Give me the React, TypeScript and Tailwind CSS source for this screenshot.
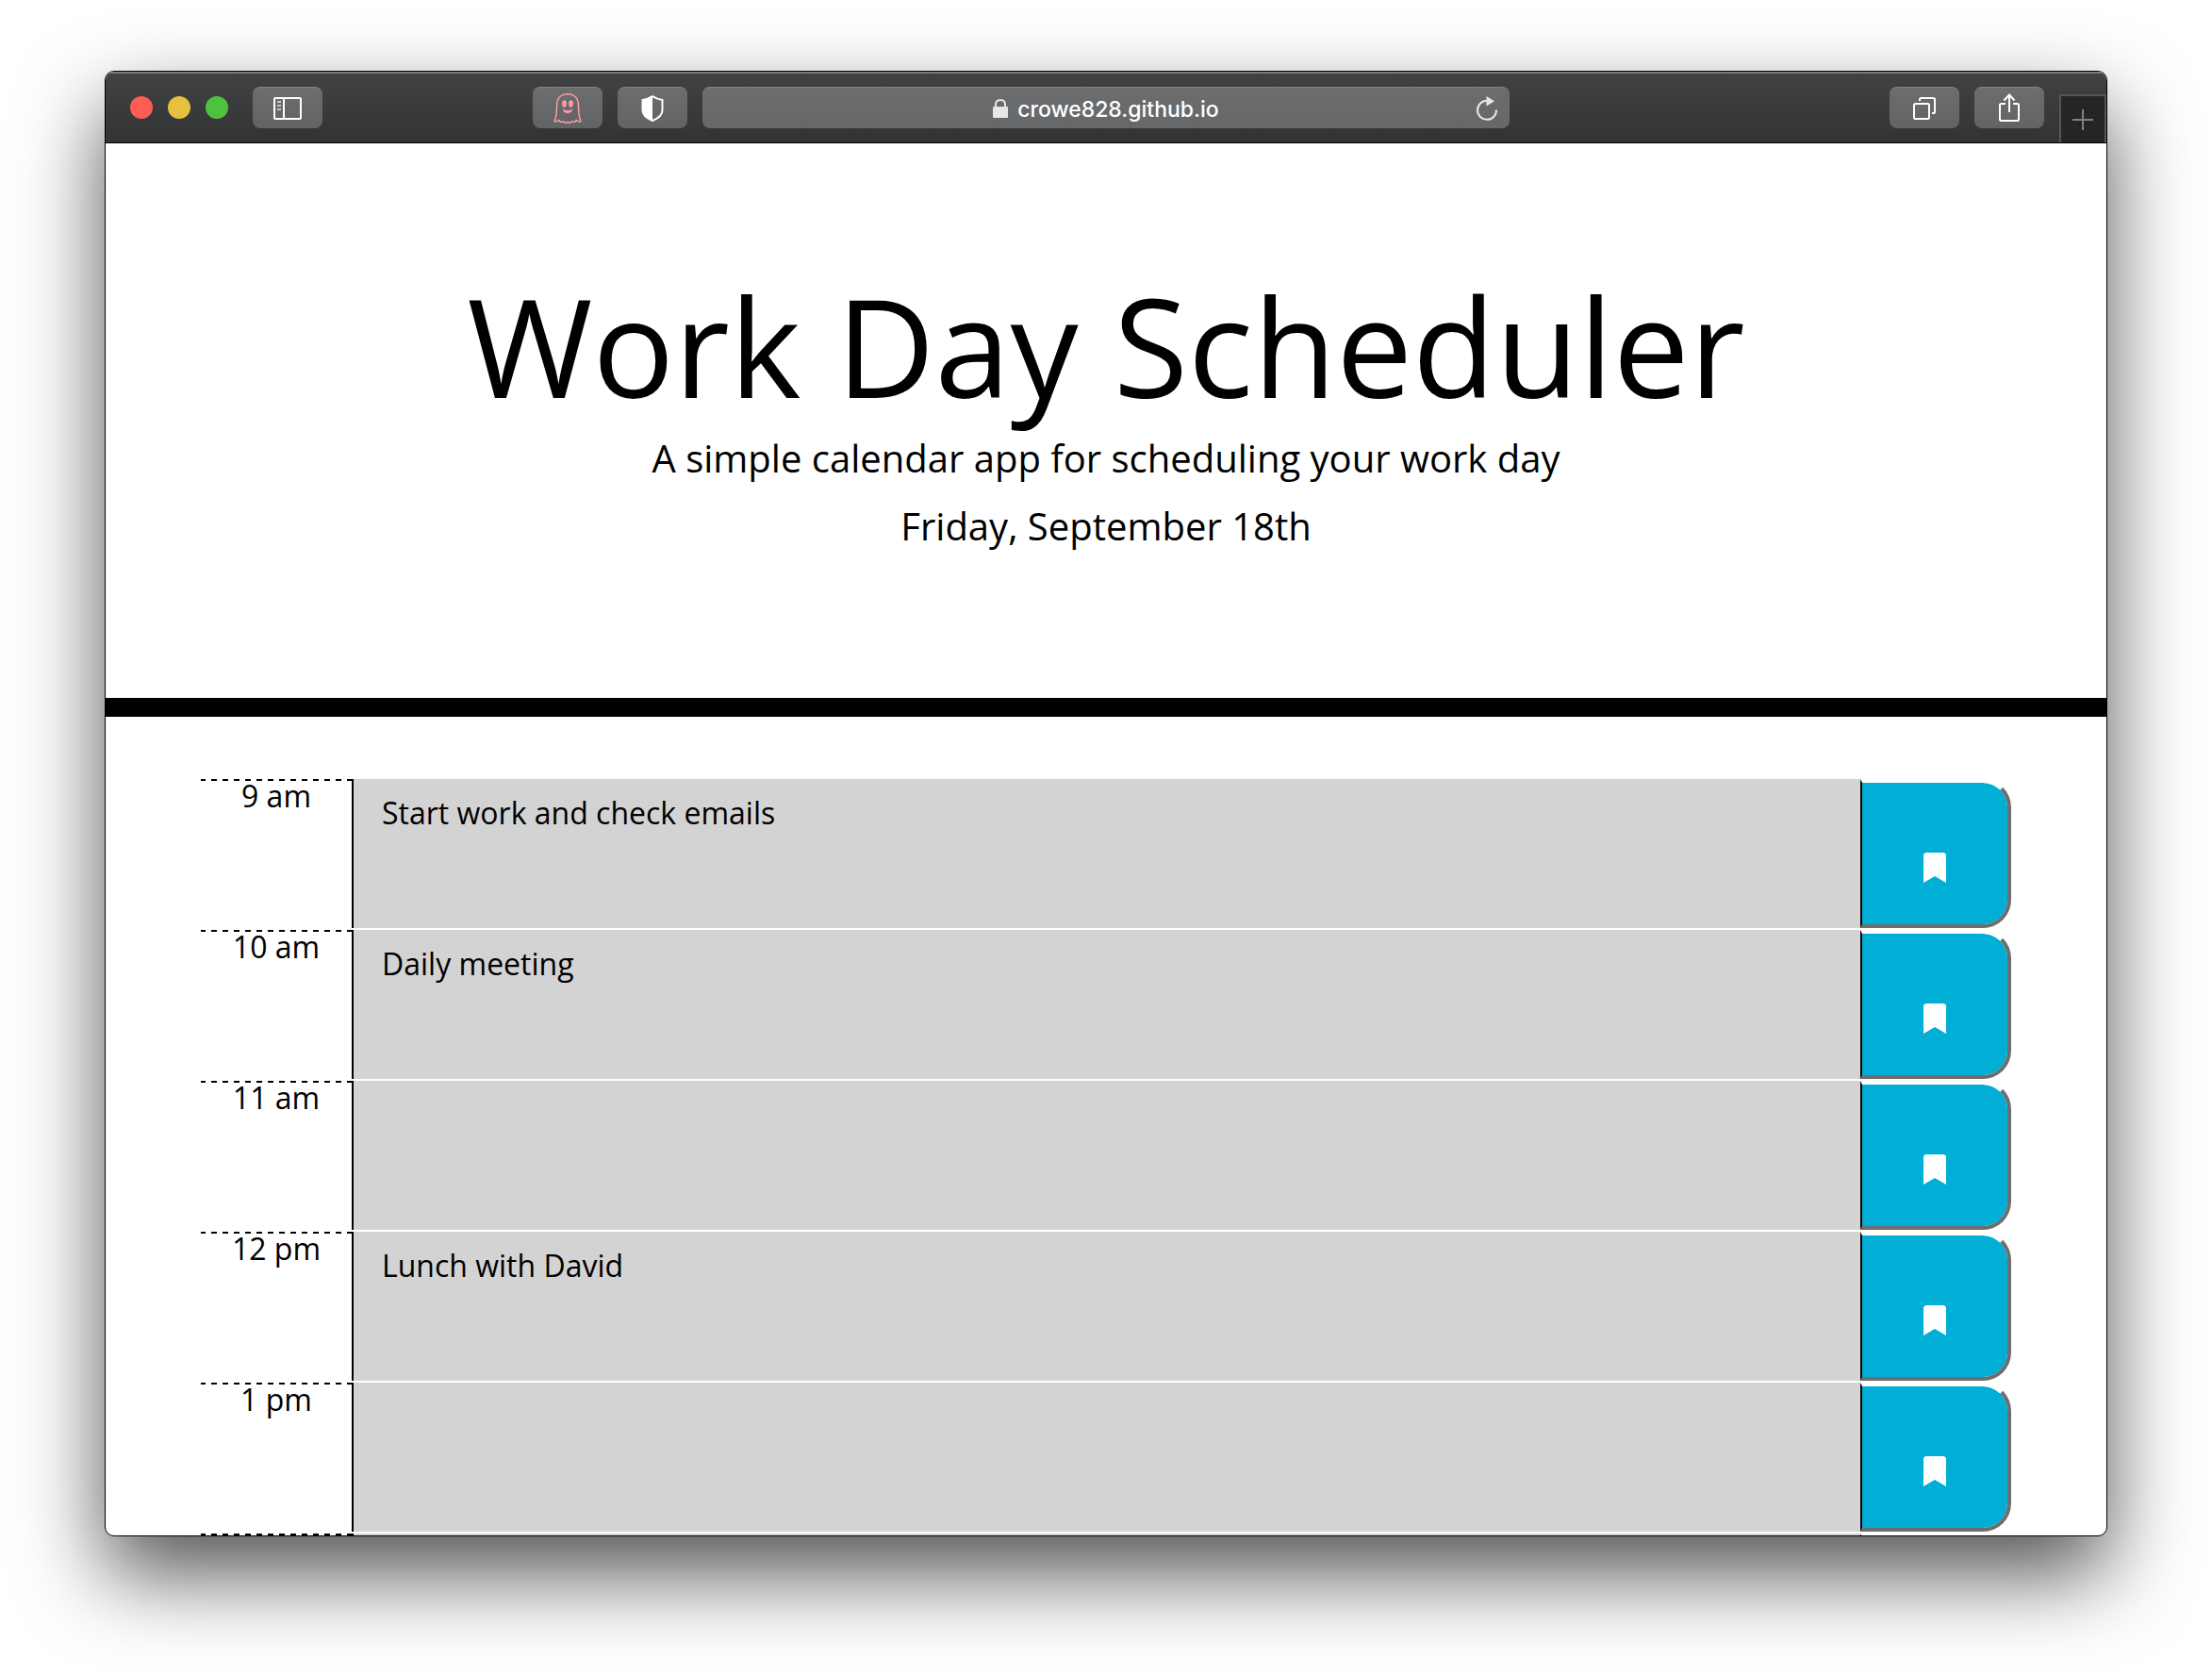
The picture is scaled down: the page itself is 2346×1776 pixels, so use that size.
import type { ReactNode } from "react";

const slots = [
  { time: "9 am", text: "Start work and check emails" },
  { time: "10 am", text: "Daily meeting" },
  { time: "11 am", text: "" },
  { time: "12 pm", text: "Lunch with David" },
  { time: "1 pm", text: "" },
  { time: "", text: "" },
];

function ToolButton({ label, children }: { label: string; children: ReactNode }) {
  return (
    <button
      type="button"
      aria-label={label}
      className="flex h-11 w-[74px] shrink-0 items-center justify-center rounded-lg border-t border-[#838486] bg-linear-to-b from-[#6c6d6f] to-[#626365]"
    >
      {children}
    </button>
  );
}

function SidebarIcon() {
  return (
    <svg width="30" height="24" viewBox="0 0 30 24" fill="none" stroke="#fff" strokeWidth="2">
      <rect x="1" y="1" width="28" height="22" rx="1" />
      <path d="M11 1v22" />
      <path d="M4 5h4M4 9h4M4 13h4" stroke="#c4c4c6" />
    </svg>
  );
}

function GhostIcon() {
  return (
    <svg width="30" height="34" viewBox="0 0 30 34" fill="none" stroke="#ff9da4" strokeWidth="1.5" strokeLinejoin="round">
      <path d="M3.500 14C3.500 6 8 1.700 15 1.700S26.500 6 26.500 14c0 8 .2 12 2.500 16.500-1.600.8-3.400.2-4.800-1.200-.6 2-2.400 2.800-4.600 1.400-1.200 1.800-3.500 2.200-4.600.6-1.100 1.600-3.400 1.200-4.600-.6-2.200 1.400-4 .6-4.600-1.400C4.400 30.700 2.600 31.300 1 30.500 3.300 26 3.500 22 3.500 14Z" />
      <g fill="#ff9da4" stroke="none">
        <ellipse cx="11.500" cy="12" rx="2.400" ry="3.700" />
        <ellipse cx="18.500" cy="12" rx="2.400" ry="3.700" />
        <path d="M9.500 17.500c3.500 2 7.500 2 11 0-.8 3-2.900 4.600-5.500 4.600s-4.700-1.600-5.500-4.600Z" />
      </g>
    </svg>
  );
}

function ShieldIcon() {
  return (
    <svg width="24" height="28" viewBox="0 0 24 28">
      <path d="M12 1.200C9 3.200 5.500 4.400 1.500 5v11c0 5 4.500 8.500 10.500 11 6-2.500 10.500-6 10.500-11V5C18.500 4.400 15 3.200 12 1.200Z" fill="none" stroke="#fff" strokeWidth="2" strokeLinejoin="round" />
      <path d="M12 1C9 3 5.500 4.400 1.500 5v11c0 5 4.500 8.500 10.500 11Z" fill="#fff" />
    </svg>
  );
}

function LockIcon() {
  return (
    <svg width="16" height="20" viewBox="0 0 16 20">
      <path d="M3 9V6C3 3 5 1 8 1s5 2 5 5v3" fill="none" stroke="#e6e6e6" strokeWidth="2" />
      <rect y="8" width="16" height="12" rx="1" fill="#e6e6e6" />
    </svg>
  );
}

function ReloadIcon() {
  return (
    <svg width="24" height="26" viewBox="0 0 24 26">
      <path d="M12 4.800A10 10 0 1 0 22 14.500" fill="none" stroke="#e6e6e6" strokeWidth="2" />
      <path d="M11.500 0v10.500L20 5.200Z" fill="#e6e6e6" />
    </svg>
  );
}

function TabsIcon() {
  return (
    <svg width="24" height="24" viewBox="0 0 24 24" fill="none" stroke="#fff" strokeWidth="2">
      <rect x="1" y="7" width="16" height="16" rx="1.500" />
      <path d="M7 4V2.500C7 1.500 7.500 1 8.500 1h13c1 0 1.500.5 1.500 1.500v13c0 1-.5 1.500-1.500 1.500H20" />
    </svg>
  );
}

function ShareIcon() {
  return (
    <svg width="22" height="32" viewBox="0 0 22 32" fill="none" stroke="#fff" strokeWidth="2">
      <path d="M7 11H2.500C1.500 11 1 11.500 1 12.500v15c0 1 .5 1.500 1.500 1.500h17c1 0 1.500-.5 1.500-1.500v-15c0-1-.5-1.500-1.500-1.500H15" />
      <path d="M11 20V1.500M5.500 7.500 11 1.500l5.500 6" />
    </svg>
  );
}

function Toolbar() {
  return (
    <header className="grid h-[76px] shrink-0 grid-cols-[minmax(0,1fr)_minmax(0,856px)_minmax(0,1fr)] border-t-2 border-b border-t-[#77787a] border-b-black bg-linear-to-b from-[#414244] to-[#323335]">
      <div className="flex items-center justify-between pr-4 pb-px pl-[26px]">
        <div className="flex items-center gap-4">
          <button type="button" aria-label="Close window" className="size-6 rounded-full bg-[#ff5c53]" />
          <button type="button" aria-label="Minimize window" className="size-6 rounded-full bg-[#e6c03f]" />
          <button type="button" aria-label="Zoom window" className="mr-[10px] size-6 rounded-full bg-[#4fc23d]" />
          <ToolButton label="Show sidebar">
            <SidebarIcon />
          </ToolButton>
        </div>
        <div className="flex gap-4">
          <ToolButton label="Ghostery">
            <GhostIcon />
          </ToolButton>
          <ToolButton label="Privacy report">
            <ShieldIcon />
          </ToolButton>
        </div>
      </div>
      <div className="mb-px flex h-11 items-center self-center rounded-lg border-t border-[#838486] bg-linear-to-b from-[#6c6d6f] to-[#666769] pr-3 pl-9">
        <a href="https://crowe828.github.io" className="flex flex-1 items-center justify-center gap-[10px] font-['Inter'] text-[23px] leading-8 font-medium text-white">
          <LockIcon />
          <span className="pt-0.5">crowe828.github.io</span>
        </a>
        <button type="button" aria-label="Reload page">
          <ReloadIcon />
        </button>
      </div>
      <div className="flex items-center justify-end gap-4">
        <div className="flex gap-4 pb-px">
          <ToolButton label="Show tab overview">
            <TabsIcon />
          </ToolButton>
          <ToolButton label="Share">
            <ShareIcon />
          </ToolButton>
        </div>
        <button
          type="button"
          aria-label="New tab"
          className="flex h-[51px] w-[50px] items-center justify-center self-end border-x-2 border-t-2 border-[#555658] bg-[#242527]"
        >
          <svg width="22" height="22" viewBox="0 0 22 22" stroke="#808183" strokeWidth="2">
            <path d="M11 0v22M0 11h22" />
          </svg>
        </button>
      </div>
    </header>
  );
}

function TimeBlock({ id, time, text }: { id: string; time: string; text: string }) {
  return (
    <div className="grid h-40 grid-cols-12 pb-0.5 text-[32px]">
      <label htmlFor={id} className="flex flex-col text-center leading-8">
        <span className="h-0.5 bg-[repeating-linear-gradient(90deg,#000_-1px_5px,transparent_5px_11px)]" />
        {time}
      </label>
      <textarea
        id={id}
        defaultValue={text}
        className="col-span-10 block h-full resize-none overflow-hidden border-l-2 border-black bg-[#d3d3d3] px-[30px] py-3 leading-12 outline-none"
      />
      <button
        type="button"
        aria-label={"Save " + time}
        className="flex items-center justify-center rounded-r-[30px] border-4 border-l-2 border-t-white border-r-[#6d6d6d] border-b-[#6d6d6d] border-l-black bg-[#00aed6] bg-clip-padding pt-[30px]"
      >
        <svg width="24" height="32" viewBox="0 0 384 512" fill="#fff">
          <path d="M0 512V48C0 21.490 21.490 0 48 0h288c26.510 0 48 21.490 48 48v464L192 400 0 512z" />
        </svg>
      </button>
    </div>
  );
}

export default function App() {
  return (
    <div className="flex h-screen flex-col bg-white px-[111px] pt-[75px] pb-[147px]">
      <div className="flex min-h-0 flex-1 flex-col overflow-hidden rounded-[10px] border border-black bg-white font-['Open_Sans',sans-serif] text-black shadow-[0_40px_90px_rgba(0,0,0,0.68)]">
        <Toolbar />
        <main className="min-h-0 flex-1 overflow-hidden">
          <section className="border-b-[20px] border-black pt-[124px] pb-[152px] text-center">
            <h1 className="text-[144px] leading-[180px]">Work Day Scheduler</h1>
            <p className="text-[40px] leading-[60px]">A simple calendar app for scheduling your work day</p>
            <p className="mt-3 text-[40px] leading-[60px]">Friday, September 18th</p>
          </section>
          <section className="mx-auto mt-[66px] max-w-[1920px]">
            {slots.map((slot, i) => (
              <TimeBlock key={i} id={"slot-" + i} time={slot.time} text={slot.text} />
            ))}
          </section>
        </main>
      </div>
    </div>
  );
}
